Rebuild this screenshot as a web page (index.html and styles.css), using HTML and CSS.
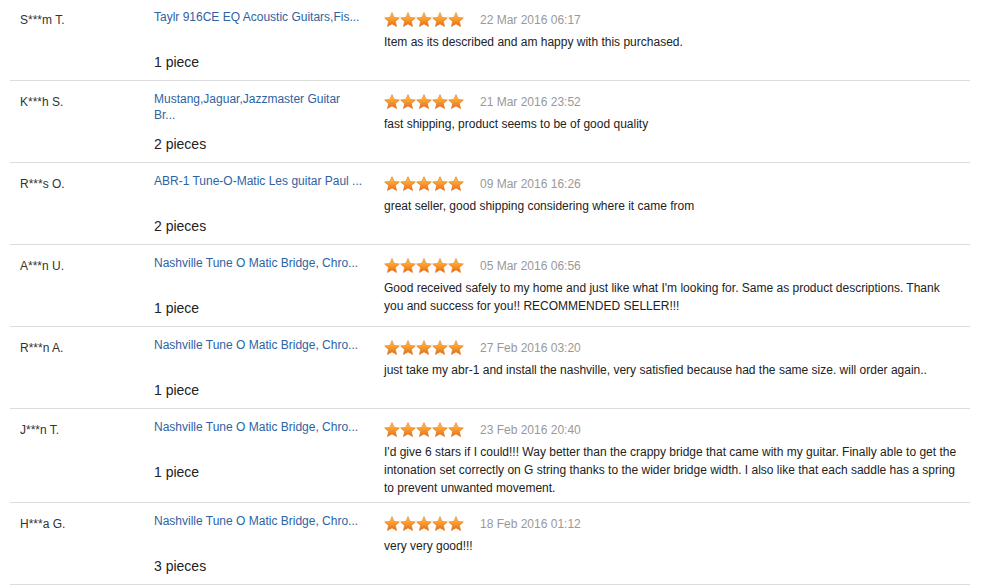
FILE: index.html
```html
<!DOCTYPE html>
<html>
<head>
<meta charset="utf-8">
<link rel="stylesheet" href="styles.css">
</head>
<body>
<svg width="0" height="0" class="defs">
  <defs>
    <linearGradient id="sg" x1="0" y1="0" x2="0" y2="1">
      <stop offset="0" stop-color="#ffc35a"/>
      <stop offset="0.5" stop-color="#f99a2c"/>
      <stop offset="1" stop-color="#e8661a"/>
    </linearGradient>
    <symbol id="star" viewBox="0 0 16 16">
      <path d="M8 0.6 L10.1 5.4 L15.4 5.9 L11.4 9.4 L12.6 14.6 L8 11.9 L3.4 14.6 L4.6 9.4 L0.6 5.9 L5.9 5.4 Z" fill="url(#sg)" stroke="#e07a20" stroke-width="0.6" stroke-linejoin="round"/>
    </symbol>
  </defs>
</svg>
<div class="list">
  <div class="row">
    <div class="name">S***m T.</div>
    <div class="prod"><a class="link">Taylr 916CE EQ Acoustic Guitars,Fis...</a><div class="qty">1 piece</div></div>
    <div class="rev">
      <div class="meta"><span class="stars"><svg><use href="#star"/></svg><svg><use href="#star"/></svg><svg><use href="#star"/></svg><svg><use href="#star"/></svg><svg><use href="#star"/></svg></span><span class="date">22 Mar 2016 06:17</span></div>
      <div class="text">Item as its described and am happy with this purchased.</div>
    </div>
  </div>
  <div class="row">
    <div class="name">K***h S.</div>
    <div class="prod"><a class="link">Mustang,Jaguar,Jazzmaster Guitar Br...</a><div class="qty">2 pieces</div></div>
    <div class="rev">
      <div class="meta"><span class="stars"><svg><use href="#star"/></svg><svg><use href="#star"/></svg><svg><use href="#star"/></svg><svg><use href="#star"/></svg><svg><use href="#star"/></svg></span><span class="date">21 Mar 2016 23:52</span></div>
      <div class="text">fast shipping, product seems to be of good quality</div>
    </div>
  </div>
  <div class="row">
    <div class="name">R***s O.</div>
    <div class="prod"><a class="link">ABR-1 Tune-O-Matic Les guitar Paul ...</a><div class="qty">2 pieces</div></div>
    <div class="rev">
      <div class="meta"><span class="stars"><svg><use href="#star"/></svg><svg><use href="#star"/></svg><svg><use href="#star"/></svg><svg><use href="#star"/></svg><svg><use href="#star"/></svg></span><span class="date">09 Mar 2016 16:26</span></div>
      <div class="text">great seller, good shipping considering where it came from</div>
    </div>
  </div>
  <div class="row">
    <div class="name">A***n U.</div>
    <div class="prod"><a class="link">Nashville Tune O Matic Bridge, Chro...</a><div class="qty">1 piece</div></div>
    <div class="rev">
      <div class="meta"><span class="stars"><svg><use href="#star"/></svg><svg><use href="#star"/></svg><svg><use href="#star"/></svg><svg><use href="#star"/></svg><svg><use href="#star"/></svg></span><span class="date">05 Mar 2016 06:56</span></div>
      <div class="text">Good received safely to my home and just like what I'm looking for. Same as product descriptions. Thank you and success for you!! RECOMMENDED SELLER!!!</div>
    </div>
  </div>
  <div class="row">
    <div class="name">R***n A.</div>
    <div class="prod"><a class="link">Nashville Tune O Matic Bridge, Chro...</a><div class="qty">1 piece</div></div>
    <div class="rev">
      <div class="meta"><span class="stars"><svg><use href="#star"/></svg><svg><use href="#star"/></svg><svg><use href="#star"/></svg><svg><use href="#star"/></svg><svg><use href="#star"/></svg></span><span class="date">27 Feb 2016 03:20</span></div>
      <div class="text">just take my abr-1 and install the nashville, very satisfied because had the same size. will order again..</div>
    </div>
  </div>
  <div class="row">
    <div class="name">J***n T.</div>
    <div class="prod"><a class="link">Nashville Tune O Matic Bridge, Chro...</a><div class="qty">1 piece</div></div>
    <div class="rev">
      <div class="meta"><span class="stars"><svg><use href="#star"/></svg><svg><use href="#star"/></svg><svg><use href="#star"/></svg><svg><use href="#star"/></svg><svg><use href="#star"/></svg></span><span class="date">23 Feb 2016 20:40</span></div>
      <div class="text">I'd give 6 stars if I could!!! Way better than the crappy bridge that came with my guitar. Finally able to get the intonation set correctly on G string thanks to the wider bridge width. I also like that each saddle has a spring to prevent unwanted movement.</div>
    </div>
  </div>
  <div class="row">
    <div class="name">H***a G.</div>
    <div class="prod"><a class="link">Nashville Tune O Matic Bridge, Chro...</a><div class="qty">3 pieces</div></div>
    <div class="rev">
      <div class="meta"><span class="stars"><svg><use href="#star"/></svg><svg><use href="#star"/></svg><svg><use href="#star"/></svg><svg><use href="#star"/></svg><svg><use href="#star"/></svg></span><span class="date">18 Feb 2016 01:12</span></div>
      <div class="text">very very good!!!</div>
    </div>
  </div>
</div>
</body>
</html>
```
FILE: styles.css
```css
html, body {
  margin: 0;
  padding: 0;
  background: #fff;
}
body {
  font-family: "Liberation Sans", Arial, sans-serif;
  color: #333;
  font-size: 12px;
}
.defs {
  position: absolute;
  width: 0;
  height: 0;
}
.list {
  margin: -1px 11px 0 10px;
}
.row {
  display: flex;
  border-bottom: 1px solid #dcdcdc;
}
.name {
  width: 144px;
  flex: none;
  box-sizing: border-box;
  padding: 12px 0 0 10px;
  line-height: 18px;
  font-size: 12px;
  color: #333;
}
.prod {
  width: 230px;
  flex: none;
  box-sizing: border-box;
  padding: 10px 0 9px 0;
}
.link {
  display: block;
  width: 209px;
  height: 32px;
  line-height: 16px;
  color: #2e63a3;
  font-size: 12px;
  cursor: pointer;
}
.qty {
  margin-top: 12px;
  line-height: 18px;
  font-size: 14px;
  color: #222;
}
.rev {
  flex: 1;
  padding: 12px 12px 5px 0;
}
.meta {
  display: flex;
  align-items: center;
  height: 18px;
  margin-bottom: 4px;
}
.stars {
  display: flex;
  height: 16px;
}
.stars svg {
  width: 16px;
  height: 16px;
  display: block;
}
.date {
  margin-left: 16px;
  color: #999;
  font-size: 12px;
  line-height: 18px;
}
.text {
  line-height: 18px;
  color: #222;
  font-size: 12px;
}
```
